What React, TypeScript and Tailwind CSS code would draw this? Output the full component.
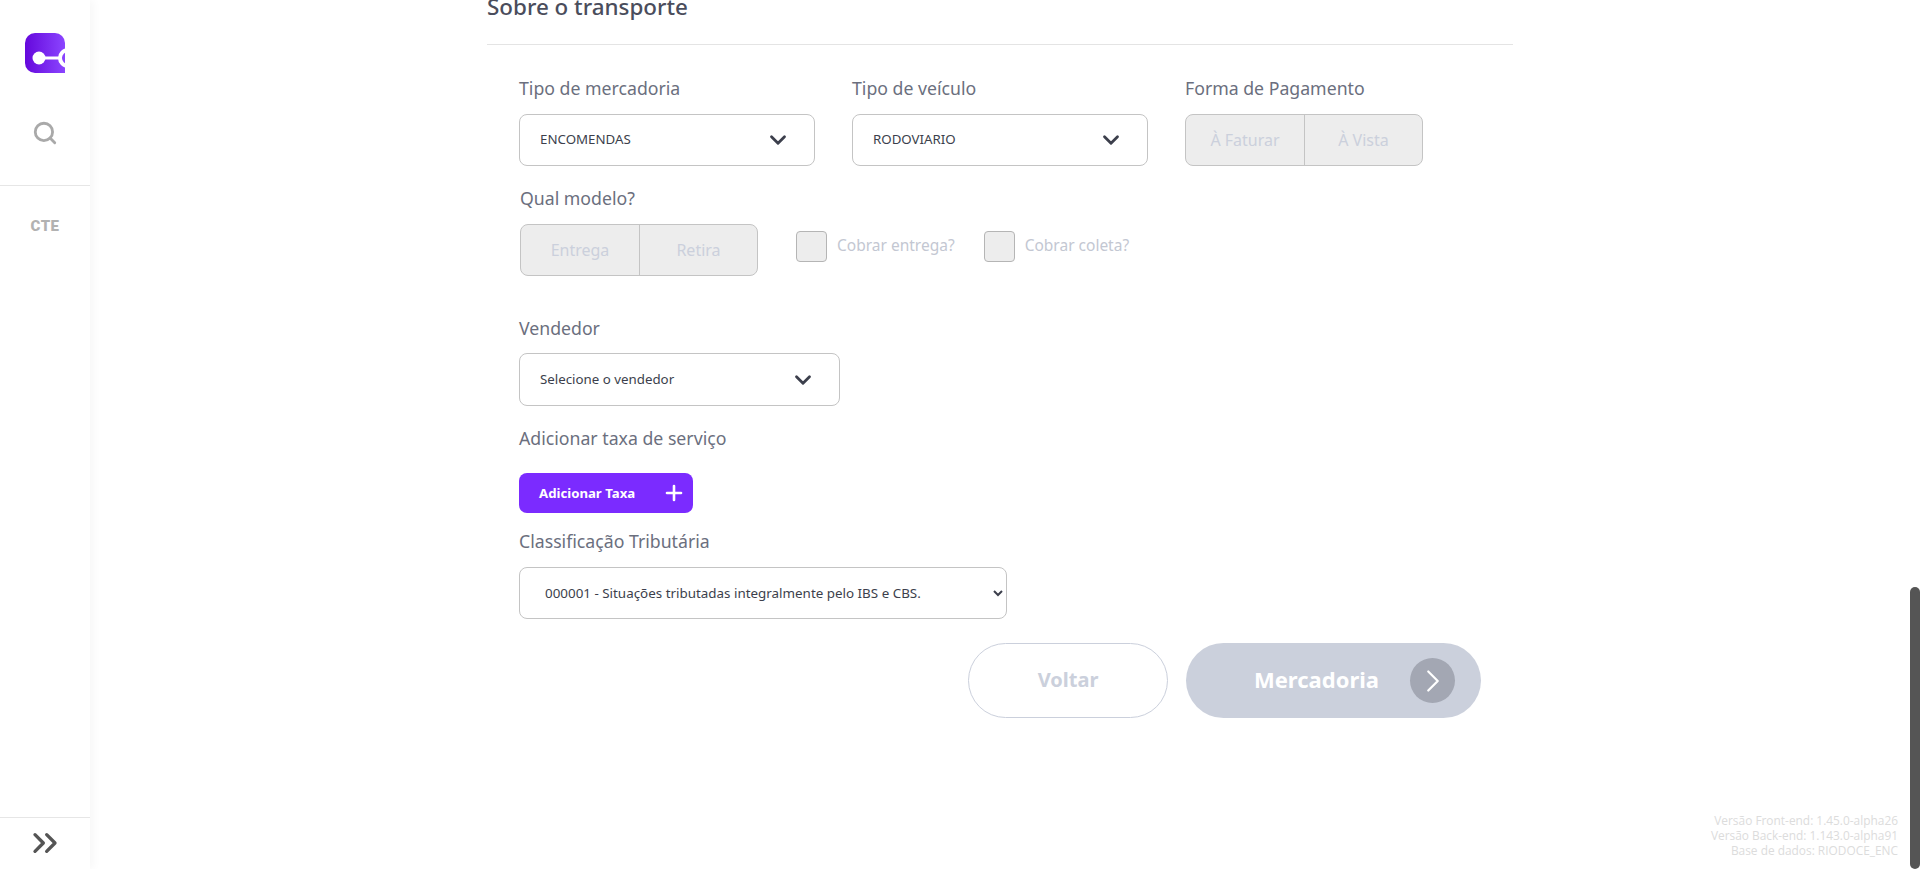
import React from "react";
import { ChevronDown, ChevronRight, ChevronsRight, Plus, Search } from "lucide-react";

const labelClass = "h-6 text-[17.7px] leading-6 text-[#6b6f7e] font-['Noto_Sans',sans-serif]";
const selectBox =
  "flex items-center justify-between rounded-lg border border-[#c4c4c4] bg-white text-[13.3px] text-[#3c3f4c] font-['Noto_Sans',sans-serif]";

const Logo = () => (
  <svg width="40" height="40" viewBox="0 0 40 40" className="block">
    <defs>
      <linearGradient id="logo" x1="0" y1="0" x2="1" y2="0">
        <stop offset="0" stopColor="#6508dc" />
        <stop offset="1" stopColor="#8b45ff" />
      </linearGradient>
    </defs>
    <path d="M10 0H30A10 10 0 0 1 40 10V40H10A10 10 0 0 1 0 30V10A10 10 0 0 1 10 0Z" fill="url(#logo)" />
    <circle cx="14" cy="25" r="6.5" fill="#fff" />
    <rect x="18" y="23.5" width="18" height="3" fill="#fff" />
    <circle cx="43" cy="25" r="8" fill="none" stroke="#fff" strokeWidth="4" />
  </svg>
);

const FakeSelect = ({ text, className }: { text: string; className: string }) => (
  <div className={`${selectBox} ${className}`}>
    <span>{text}</span>
    <ChevronDown size={26} strokeWidth={2.6} className="text-[#3c3f4c]" />
  </div>
);

const Segmented = ({ left, right }: { left: string; right: string }) => (
  <div className="flex h-[52px] w-[238px] rounded-lg border border-[#c4c4c4] bg-[#ededed] text-[16px] text-[#cbd0dc] font-['Noto_Sans',sans-serif]">
    <div className="flex w-[119px] items-center justify-center border-r border-[#c4c4c4]">{left}</div>
    <div className="flex flex-1 items-center justify-center">{right}</div>
  </div>
);

const CheckOption = ({ text }: { text: string }) => (
  <div className="flex h-[31px] items-center gap-[10px]">
    <div className="h-[31px] w-[31px] rounded-[4px] border border-[#b5b5b5] bg-[#ededed]" />
    <span className="pb-[2px] text-[15.5px] text-[#c3c7d2] font-['Noto_Sans',sans-serif]">{text}</span>
  </div>
);

export default function App() {
  return (
    <div className="relative flex h-[869px] w-full overflow-hidden bg-white">
      <aside className="relative flex w-[90px] shrink-0 flex-col items-center bg-white shadow-[4px_0_8px_rgba(0,0,0,0.03)]">
        <div className="mt-[33px]">
          <Logo />
        </div>
        <Search size={26} strokeWidth={2.6} className="mt-[47px] text-[#a9a9a9]" />
        <div className="mt-[39px] h-px w-full bg-[#e6e6e6]" />
        <span className="mt-[31px] text-[15px] font-black leading-[18px] tracking-[0.5px] text-[#b2b2b2] font-['Roboto',sans-serif]">
          CTE
        </span>
        <div className="mt-auto flex h-[52px] w-full items-center justify-center border-t border-[#e6e6e6] pb-[2px]">
          <ChevronsRight size={40} strokeWidth={2} className="text-[#555]" />
        </div>
      </aside>

      <main className="flex-1">
        <div className="mx-auto -mt-px w-[1026px]">
          <div className="h-[46px] border-b border-[#e4e4e4]">
            <h2 className="text-[22.4px] font-medium leading-[16px] text-[#4a4d5c] font-['Noto_Sans',sans-serif]">
              Sobre o transporte
            </h2>
          </div>

          <div className="pl-8 pt-[31px]">
            <div className="flex gap-[37px]">
              <div className="w-[296px]">
                <div className={labelClass}>Tipo de mercadoria</div>
                <FakeSelect text="ENCOMENDAS" className="mt-[14px] h-[52px] pl-5 pr-[23px]" />
              </div>
              <div className="w-[296px]">
                <div className={labelClass}>Tipo de veículo</div>
                <FakeSelect text="RODOVIARIO" className="mt-[14px] h-[52px] pl-5 pr-[23px]" />
              </div>
              <div className="w-[238px]">
                <div className={labelClass}>Forma de Pagamento</div>
                <div className="mt-[14px]">
                  <Segmented left="À Faturar" right="À Vista" />
                </div>
              </div>
            </div>

            <div className="mt-5 pl-px">
              <div className={labelClass}>Qual modelo?</div>
              <div className="mt-[14px] flex items-start">
                <Segmented left="Entrega" right="Retira" />
                <div className="ml-[38px] mt-[7px] flex gap-[29px]">
                  <CheckOption text="Cobrar entrega?" />
                  <CheckOption text="Cobrar coleta?" />
                </div>
              </div>
            </div>

            <div className="mt-10">
              <div className={labelClass}>Vendedor</div>
              <FakeSelect text="Selecione o vendedor" className="mt-[13px] h-[53px] w-[321px] pl-5 pr-[23px]" />
            </div>

            <div className="mt-5">
              <div className={labelClass}>Adicionar taxa de serviço</div>
              <button className="mt-[23px] flex h-10 w-[174px] items-center justify-between rounded-lg bg-[#7b2bff] pl-5 pr-[7px] text-[13.2px] font-bold text-white font-['Noto_Sans',sans-serif]">
                <span className="pt-px">Adicionar Taxa</span>
                <Plus size={24} strokeWidth={2.6} />
              </button>
            </div>

            <div className="mt-4">
              <div className={labelClass}>Classificação Tributária</div>
              <select
                defaultValue="000001"
                className="mt-[14px] h-[52px] w-[488px] rounded-lg border border-[#c4c4c4] bg-white pl-[21px] pr-1 text-[13.4px] text-[#3c3f4c] font-['Noto_Sans',sans-serif]"
              >
                <option value="000001">000001 - Situações tributadas integralmente pelo IBS e CBS.</option>
              </select>
            </div>

            <div className="mt-6 flex gap-[18px] pl-[449px]">
              <button className="h-[75px] w-[200px] rounded-full border border-[#cbd0dc] bg-white pb-[2px] text-[20px] font-bold text-[#cbd0dc] font-['Noto_Sans',sans-serif]">
                Voltar
              </button>
              <button className="flex h-[75px] w-[295px] items-center justify-end gap-[31px] rounded-full bg-[#cbd0dc] pr-[26px] text-[22px] font-bold text-white font-['Noto_Sans',sans-serif]">
                <span className="pb-[2px]">Mercadoria</span>
                <span className="flex h-[45px] w-[45px] items-center justify-center rounded-full bg-[#a3a7b3]">
                  <ChevronRight size={38} strokeWidth={1.4} />
                </span>
              </button>
            </div>
          </div>
        </div>
      </main>

      <div className="flex w-[10px] shrink-0 flex-col justify-end">
        <div className="h-[282px] rounded-[5px] bg-[#555]" />
      </div>

      <div className="absolute bottom-[11px] right-[22px] text-right text-[11.9px] leading-[15px] text-[#dcdcdc] font-['Open_Sans',sans-serif]">
        <div>Versão Front-end: 1.45.0-alpha26</div>
        <div>Versão Back-end: 1.143.0-alpha91</div>
        <div>Base de dados: RIODOCE_ENC</div>
      </div>
    </div>
  );
}
